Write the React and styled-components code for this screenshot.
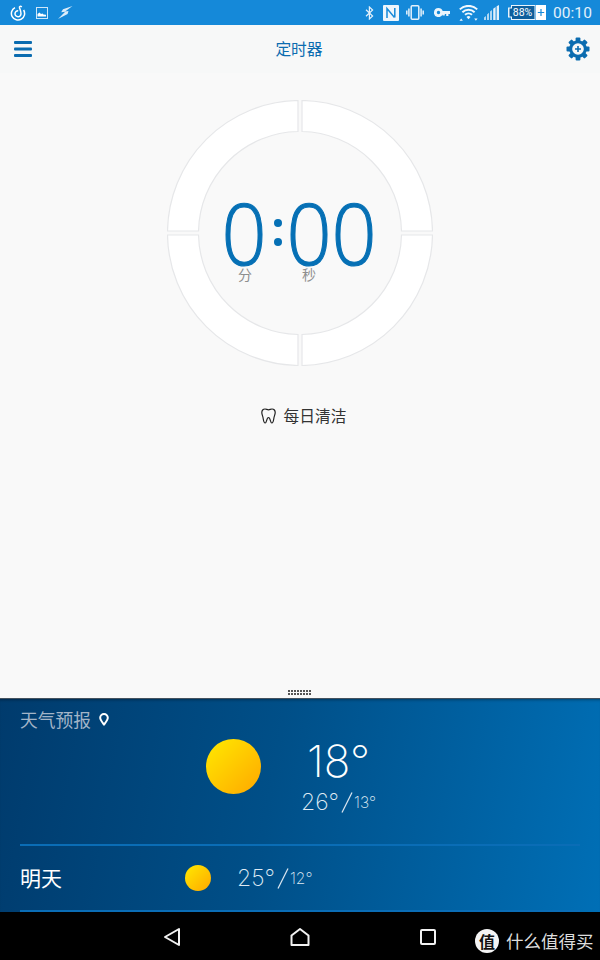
import React from "react";
import styled, { createGlobalStyle } from "styled-components";

const CJK = '"Noto Sans CJK SC", "Noto Sans", sans-serif';

const Global = createGlobalStyle`
  html, body { margin: 0; padding: 0; background: #f9f9f9; }
  * { box-sizing: border-box; }
`;

const Page = styled.div`
  position: relative;
  width: 600px;
  height: 960px;
  display: flex;
  flex-direction: column;
  overflow: hidden;
  font-family: Roboto, ${CJK};
`;

const StatusBar = styled.div`
  height: 25px;
  flex: none;
  display: flex;
  align-items: center;
  justify-content: space-between;
  padding: 0 8px 0 10px;
  background: #1589d9;
  color: #e4f1fb;
`;

const StatusGroup = styled.div`
  display: flex;
  align-items: center;
  gap: ${(p) => p.$gap}px;
`;

const StatusSlot = styled.span`
  display: flex;
  margin-left: ${(p) => p.$ml || 0}px;
`;

const Clock = styled.span`
  font-size: 15.5px;
  margin-left: 7px;
  letter-spacing: 0.1px;
`;

const AppBar = styled.header`
  height: 48px;
  flex: none;
  display: flex;
  align-items: center;
  justify-content: space-between;
  padding: 0 10px 0 14px;
  background: #f7f8f8;
`;

const AppTitle = styled.h1`
  margin: 0 0 1px;
  font-size: 15.75px;
  font-weight: 400;
  color: #0b6cb0;
  font-family: ${CJK};
`;

const Main = styled.main`
  flex: 1;
  position: relative;
  display: flex;
  flex-direction: column;
  align-items: center;
  padding-top: 27px;
  background: #f9f9f9;
`;

const Dial = styled.div`
  position: relative;
  width: 266px;
  height: 266px;
`;

const Readout = styled.div`
  position: absolute;
  left: 56px;
  top: 101px;
  display: flex;
  align-items: center;
  height: 62px;
  font-family: "Open Sans", sans-serif;
  font-weight: 300;
  color: #0670b5;
  font-size: 85px;
  -webkit-text-stroke: 1.1px #0670b5;
`;

const Digit = styled.span`
  display: block;
  width: 45px;
  text-align: center;
  line-height: 62px;
  transform: translateX(-3px) scaleX(0.93);
`;

const Colon = styled.span`
  display: flex;
  flex-direction: column;
  gap: 11px;
  width: 20px;
  align-items: center;
  &::before, &::after {
    content: "";
    width: 8px;
    height: 8px;
    border-radius: 50%;
    background: #0670b5;
  }
`;

const UnitLabel = styled.span`
  position: absolute;
  top: 166px;
  left: ${(p) => p.$x}px;
  font-size: 14px;
  line-height: 16px;
  color: #8f8f8f;
  font-family: ${CJK};
`;

const Routine = styled.div`
  margin-top: 39px;
  display: flex;
  align-items: center;
  gap: 8px;
  margin-left: 7px;
  font-size: 15.75px;
  line-height: 22px;
  color: #333;
  font-family: ${CJK};
`;

const Grip = styled.div`
  position: absolute;
  left: 288px;
  bottom: 3px;
  width: 24px;
  height: 5px;
  background-image: radial-gradient(circle at 1px 1px, #555 0.9px, transparent 1px);
  background-size: 3px 3px;
`;

const Weather = styled.section`
  flex: none;
  height: 214px;
  padding: 0 20px;
  border-top: 1px solid #44525f;
  background: linear-gradient(100deg, #003b6d 0%, #004f88 45%, #006fb6 100%);
  box-shadow: inset 0 3px 3px -2px rgba(0, 0, 0, 0.35);
`;

const WeatherTitle = styled.div`
  height: 40px;
  display: flex;
  align-items: center;
  gap: 8px;
  font-size: 17.75px;
  color: #a3b5c8;
  font-family: ${CJK};
`;

const Current = styled.div`
  display: flex;
  align-items: flex-start;
  gap: 41px;
  height: 105px;
  padding-left: 186px;
`;

const Sun = styled.div`
  flex: none;
  width: ${(p) => p.$size}px;
  height: ${(p) => p.$size}px;
  border-radius: 50%;
  background: linear-gradient(135deg, #ffe000 15%, #ffae00 90%);
`;

const NowColumn = styled.div`
  display: flex;
  flex-direction: column;
  align-items: center;
  margin-top: -5px;
  margin-left: -1px;
`;

const NowTemp = styled.div`
  font-family: Inter, sans-serif;
  font-weight: 200;
  font-size: 44px;
  line-height: 54px;
  color: #fff;
`;

const Range = styled.div`
  display: flex;
  align-items: center;
  font-family: Inter, sans-serif;
  font-weight: 200;
  color: #dfeaf3;
  height: 28px;
  font-size: 23px;
`;

const RangeLow = styled.span`
  font-size: 15.5px;
  margin-left: 1px;
`;

const Slash = styled.svg`
  flex: none;
  margin-left: 2px;
`;

const ForecastRow = styled.div`
  height: 64px;
  display: flex;
  align-items: center;
  border-top: 2px solid #0a6db6;
  border-bottom: 2px solid #0a6db6;
  box-sizing: content-box;
`;

const DayName = styled.span`
  width: 165px;
  margin-top: -2px;
  font-size: 21px;
  color: #fff;
  font-family: ${CJK};
`;

const RowRange = styled.div`
  margin-left: 26px;
`;

const NavBar = styled.nav`
  flex: none;
  height: 48px;
  display: flex;
  justify-content: center;
  background: #000;
`;

const NavButton = styled.div`
  width: 128px;
  display: flex;
  align-items: center;
  justify-content: center;
  margin-top: 2px;
`;

const Watermark = styled.div`
  position: absolute;
  left: 475px;
  bottom: 7px;
  display: flex;
  align-items: center;
  gap: 7px;
`;

const WatermarkBadge = styled.span`
  width: 24px;
  height: 24px;
  border-radius: 50%;
  background: #f4f4f4;
  color: #111;
  display: flex;
  align-items: center;
  justify-content: center;
  font-size: 16px;
  font-weight: 700;
  font-family: ${CJK};
`;

const WatermarkText = styled.span`
  font-size: 17.5px;
  color: #ddd;
  font-family: ${CJK};
  white-space: nowrap;
`;

// dial: four quadrants of a ring, 4px apart
function quadrant(sx, sy) {
  const c = 133;
  const g = 2;
  const R = 132.5;
  const r = 101.5;
  const ox = Math.sqrt(R * R - g * g);
  const ix = Math.sqrt(r * r - g * g);
  const p = (x, y) => `${c + sx * x} ${c + sy * y}`;
  const sweep = sx * sy > 0 ? 1 : 0;
  const back = sweep ? 0 : 1;
  return `M${p(g, ox)} A${R} ${R} 0 0 ${back} ${p(ox, g)} L${p(ix, g)} A${r} ${r} 0 0 ${sweep} ${p(g, ix)} Z`;
}

function Ring() {
  return (
    <svg width="266" height="266" viewBox="0 0 266 266">
      {[[1, 1], [-1, 1], [1, -1], [-1, -1]].map(([x, y]) => (
        <path key={`${x}${y}`} d={quadrant(x, y)} fill="#fff" stroke="#e6e7e9" strokeWidth="1.2" />
      ))}
    </svg>
  );
}

const NeteaseIcon = () => (
  <svg width="16" height="16" viewBox="0 0 16 16" fill="none" stroke="#fff" strokeWidth="1.5">
    <path d="M5 2.6A6.6 6.6 0 1 0 13.6 5" />
    <path d="M8.2 5.800a3 3 0 1 0 2.800 3c0-2.500-1-4.500-1.500-6C9.100 1.300 10.600 .9 11.800 2" />
  </svg>
);

const ImageIcon = () => (
  <svg width="12" height="12" viewBox="0 0 12 12">
    <rect x=".5" y=".5" width="11" height="11" fill="#1589d9" stroke="#cfe6f8" />
    <path d="M1.500 9.500V7l2-1.500 1.500 1.500 1.500-.5 1 1 2.500.2v1.800z" fill="#fff" />
  </svg>
);

const BoltIcon = () => (
  <svg width="15" height="13" viewBox="0 0 15 13" fill="#dcecf9">
    <path d="M14.500 0 5 3.200 3.200 6.300l4-.6L0 13l9.600-5 .9-3-3.400.5z" />
  </svg>
);

const BluetoothIcon = () => (
  <svg width="9" height="14" viewBox="0 0 9 14" fill="none" stroke="#e4f1fb" strokeWidth="1.200">
    <path d="M1 3.800 7.600 10 4.400 13V1l3.200 3L1 10.200" />
  </svg>
);

const NfcIcon = () => (
  <svg width="16" height="16" viewBox="0 0 16 16">
    <rect width="16" height="16" rx="1" fill="#eef6fc" />
    <path d="M4 13V3.500L11.500 12.500M11.800 3v9.500" fill="none" stroke="#1589d9" strokeWidth="1.500" />
  </svg>
);

const VibrateIcon = () => (
  <svg width="18" height="15" viewBox="0 0 18 15" fill="none" stroke="#e4f1fb" strokeWidth="1.500">
    <rect x="5.200" y=".8" width="7.600" height="13.400" rx="1" />
    <path d="M2.900 3.500v8M.8 5.500v4M15.100 3.500v8M17.200 5.500v4" />
  </svg>
);

const KeyIcon = () => (
  <svg width="16" height="9" viewBox="0 0 16 9" fill="#e9f4fc">
    <path d="M4.500 0a4.500 4.500 0 0 1 4.200 3H16v3h-1.600v2h-2.200V6h-1.400v1.400H8.400V6h.3A4.500 4.500 0 1 1 4.500 0zm0 2.800a1.700 1.700 0 1 0 0 3.400 1.700 1.700 0 0 0 0-3.400z" />
  </svg>
);

const WifiIcon = () => (
  <svg width="19" height="16" viewBox="0 0 19 16" fill="none" stroke="#f2f8fd" strokeWidth="2">
    <path d="M.8 4.400a12.500 12.500 0 0 1 17.400 0M3.400 7.200a8.800 8.800 0 0 1 12.200 0M6 9.800a5.200 5.200 0 0 1 7 0" />
    <path d="M7.500 12a3 3 0 0 1 4 0l-2 2.200z" fill="#f2f8fd" stroke="none" />
    <path d="M.5 15.800h3.400L2.200 13.600zM15.200 13.600h3.400l-1.700 2.200z" fill="#f2f8fd" stroke="none" />
  </svg>
);

const SignalIcon = () => (
  <svg width="15" height="15" viewBox="0 0 15 15" fill="#e4f1fb">
    <path d="M0 12.500 2 11v4H0zM3 9.500l2-1.700V15H3zM6 6.500 8 5v10H6z" opacity=".75" />
    <path d="M9.200 3.800 11.600 2v13H9.200zM12.600 1.200 15 0v15h-2.400z" />
  </svg>
);

const BatteryIcon = () => (
  <svg width="38" height="15" viewBox="0 0 38 15">
    <path d="M3 0h24.500v15H3v-2.500H0v-10h3z" fill="#e9f4fc" />
    <path d="M4 1h22.500v13H4v-2.500H1.500v-8H4z" fill="#0f5f9c" />
    <rect x="28" y="0" width="10" height="15" fill="#fff" />
    <path d="M33 4v7M29.800 7.500h6.400" stroke="#1589d9" strokeWidth="1.200" />
    <text x="14.500" y="11.200" fontSize="10.500" fill="#fff" textAnchor="middle" fontFamily="Roboto, sans-serif">88%</text>
  </svg>
);

const MenuIcon = () => (
  <svg width="18" height="16" viewBox="0 0 18 16" fill="#0b6cb0">
    <rect width="18" height="3" rx="1" />
    <rect y="6.500" width="18" height="3" rx="1" />
    <rect y="13" width="18" height="3" rx="1" />
  </svg>
);

function gearTeeth() {
  const teeth = [];
  for (let i = 0; i < 4; i++) {
    teeth.push(<rect key={i} x="9.600" y=".5" width="4.800" height="23" rx="1" transform={`rotate(${i * 45} 12 12)`} />);
  }
  return teeth;
}

const GearIcon = () => (
  <svg width="24" height="24" viewBox="0 0 24 24" fill="#0b6cb0">
    {gearTeeth()}
    <circle cx="12" cy="12" r="8.800" />
    <circle cx="12" cy="12" r="5.800" fill="#f7f8f8" />
    <path d="M12 9v6M9 12h6" stroke="#0b6cb0" strokeWidth="1.600" />
  </svg>
);

const ToothIcon = () => (
  <svg width="15" height="16" viewBox="0 0 15 16" fill="none" stroke="#222" strokeWidth="1.200" strokeLinejoin="round">
    <path d="M4 1C2 1 .8 2.500 .8 4.500c0 2 1 3.500 1.300 5.500.3 2 .6 5 2.100 5 1.500 0 1.300-5.500 3.300-5.500s1.800 5.500 3.300 5.500c1.500 0 1.800-3 2.100-5 .3-2 1.300-3.500 1.300-5.500C14.200 2.500 13 1 11 1 9.500 1 9 1.800 7.500 1.800S5.500 1 4 1z" />
  </svg>
);

const PinIcon = () => (
  <svg width="10" height="13" viewBox="0 0 10 13" fill="none" stroke="#fff" strokeWidth="2">
    <path d="M5 11.500C3 9 1.200 7 1.200 4.800a3.800 3.800 0 0 1 7.600 0C8.800 7 7 9 5 11.500z" />
  </svg>
);

const BackIcon = () => (
  <svg width="18" height="20" viewBox="0 0 18 20" fill="none" stroke="#f2f2f2" strokeWidth="2">
    <path d="M16 2v16L2 10z" strokeLinejoin="round" />
  </svg>
);

const HomeIcon = () => (
  <svg width="20" height="20" viewBox="0 0 20 20" fill="none" stroke="#f2f2f2" strokeWidth="2">
    <path d="M1.500 18V8.500L10 2l8.500 6.500V18z" strokeLinejoin="round" />
  </svg>
);

const RecentsIcon = () => (
  <svg width="16" height="16" viewBox="0 0 16 16" fill="none" stroke="#f2f2f2" strokeWidth="2">
    <rect x="1" y="1" width="14" height="14" rx="1" />
  </svg>
);

const SlashMark = () => (
  <Slash width="12" height="21" viewBox="0 0 12 21" fill="none" stroke="#d7e4ef" strokeWidth="1.200">
    <path d="M11 .5 1 20.500" />
  </Slash>
);

export default function App() {
  return (
    <Page>
      <Global />
      <StatusBar>
        <StatusGroup $gap={10}>
          <NeteaseIcon />
          <ImageIcon />
          <BoltIcon />
        </StatusGroup>
        <StatusGroup $gap={0}>
          <StatusSlot><BluetoothIcon /></StatusSlot>
          <StatusSlot $ml={9}><NfcIcon /></StatusSlot>
          <StatusSlot $ml={7}><VibrateIcon /></StatusSlot>
          <StatusSlot $ml={10}><KeyIcon /></StatusSlot>
          <StatusSlot $ml={9}><WifiIcon /></StatusSlot>
          <StatusSlot $ml={6}><SignalIcon /></StatusSlot>
          <StatusSlot $ml={9}><BatteryIcon /></StatusSlot>
          <Clock>00:10</Clock>
        </StatusGroup>
      </StatusBar>

      <AppBar>
        <MenuIcon />
        <AppTitle>定时器</AppTitle>
        <GearIcon />
      </AppBar>

      <Main>
        <Dial>
          <Ring />
          <Readout>
            <Digit>0</Digit>
            <Colon />
            <Digit>0</Digit>
            <Digit>0</Digit>
          </Readout>
          <UnitLabel $x={71}>分</UnitLabel>
          <UnitLabel $x={135}>秒</UnitLabel>
        </Dial>
        <Routine>
          <ToothIcon />
          每日清洁
        </Routine>
        <Grip />
      </Main>

      <Weather>
        <WeatherTitle>
          天气预报
          <PinIcon />
        </WeatherTitle>
        <Current>
          <Sun $size={55} />
          <NowColumn>
            <NowTemp>18°</NowTemp>
            <Range>
              26°<SlashMark />
              <RangeLow>13°</RangeLow>
            </Range>
          </NowColumn>
        </Current>
        <ForecastRow>
          <DayName>明天</DayName>
          <Sun $size={26} />
          <RowRange>
            <Range>
              25°<SlashMark />
              <RangeLow>12°</RangeLow>
            </Range>
          </RowRange>
        </ForecastRow>
      </Weather>

      <NavBar>
        <NavButton><BackIcon /></NavButton>
        <NavButton><HomeIcon /></NavButton>
        <NavButton><RecentsIcon /></NavButton>
      </NavBar>
      <Watermark>
        <WatermarkBadge>值</WatermarkBadge>
        <WatermarkText>什么值得买</WatermarkText>
      </Watermark>
    </Page>
  );
}
